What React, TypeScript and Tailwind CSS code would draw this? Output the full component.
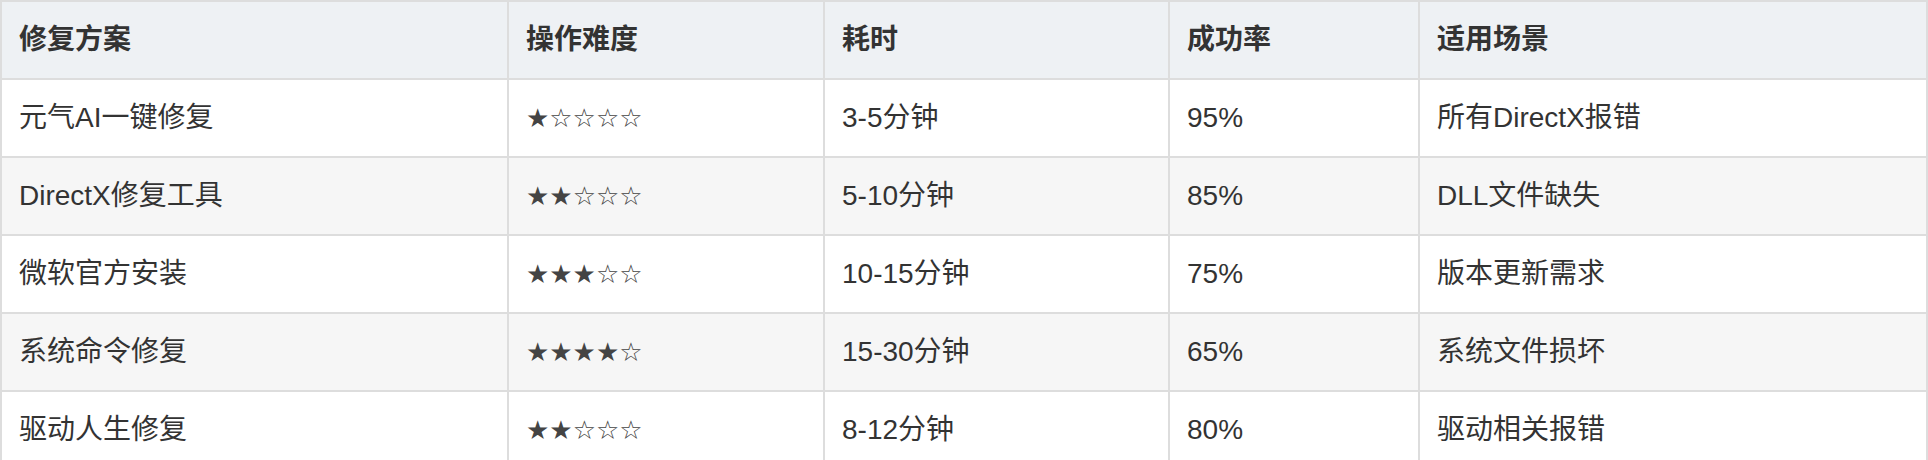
import React from 'react';

const rows = [
  { name: '元气AI一键修复', level: 1, time: '3-5分钟', rate: '95%', scene: '所有DirectX报错' },
  { name: 'DirectX修复工具', level: 2, time: '5-10分钟', rate: '85%', scene: 'DLL文件缺失' },
  { name: '微软官方安装', level: 3, time: '10-15分钟', rate: '75%', scene: '版本更新需求' },
  { name: '系统命令修复', level: 4, time: '15-30分钟', rate: '65%', scene: '系统文件损坏' },
  { name: '驱动人生修复', level: 2, time: '8-12分钟', rate: '80%', scene: '驱动相关报错' },
];

const cell = 'border-2 border-[#dddddd] px-[17px] py-[16px] leading-[44px] text-left align-middle';

const Stars: React.FC<{ n: number }> = ({ n }) => (
  <span className="font-['DejaVu_Sans',sans-serif] text-[26px] text-[#444]">
    {'★'.repeat(n)}
    {'☆'.repeat(5 - n)}
  </span>
);

export default function App() {
  return (
    <div className="w-[1928px] bg-white">
      <table className="w-[1926px] table-fixed border-collapse font-['Liberation_Sans','Noto_Sans_CJK_SC',sans-serif] text-[28px] text-[#333]">
        <thead>
          <tr className="bg-[#eef1f4]">
            <th className={`${cell} w-[507px] font-bold`}>修复方案</th>
            <th className={`${cell} w-[316px] font-bold`}>操作难度</th>
            <th className={`${cell} w-[345px] font-bold`}>耗时</th>
            <th className={`${cell} w-[250px] font-bold`}>成功率</th>
            <th className={`${cell} w-[508px] font-bold`}>适用场景</th>
          </tr>
        </thead>
        <tbody>
          {rows.map((r, i) => (
            <tr key={r.name} className={i % 2 === 1 ? 'bg-[#f6f6f6]' : 'bg-white'}>
              <td className={cell}>{r.name}</td>
              <td className={cell}>
                <Stars n={r.level} />
              </td>
              <td className={cell}>{r.time}</td>
              <td className={cell}>{r.rate}</td>
              <td className={cell}>{r.scene}</td>
            </tr>
          ))}
        </tbody>
      </table>
    </div>
  );
}
